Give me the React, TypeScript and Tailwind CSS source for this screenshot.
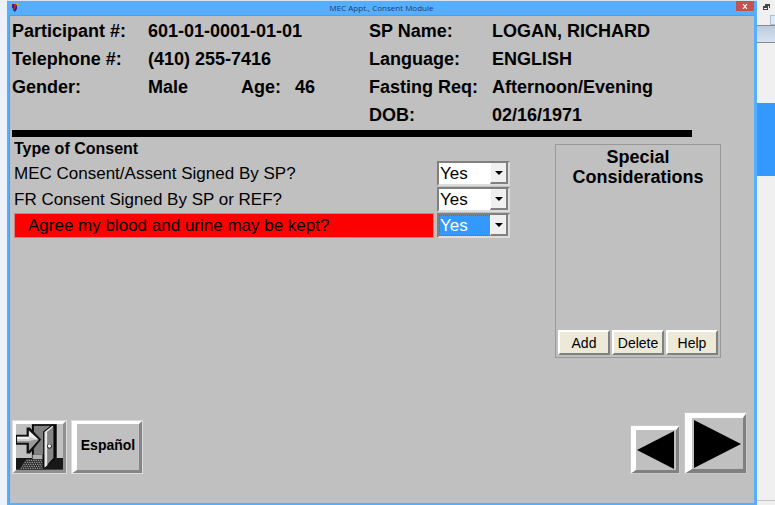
import { ReactNode, useState } from 'react'

interface Question {
  id: string
  text: string
  active?: boolean
}

const questions: Question[] = [
  { id: 'mec', text: 'MEC Consent/Assent Signed By SP?' },
  { id: 'fr', text: 'FR Consent Signed By SP or REF?' },
  { id: 'blood', text: 'Agree my blood and urine may be kept?', active: true },
]

function TitleBar() {
  return (
    <header className="relative flex h-[14px] items-center justify-center">
      <svg className="absolute left-px top-[2px] h-[9px] w-[9px]" viewBox="0 0 9 9" aria-hidden="true">
        <path d="M0 1l2-1h5l2 1v2H7v2H2V3H0z" fill="#c9a63a" />
        <path d="M2 1h2v5L2 5z" fill="#1d2f9c" />
        <path d="M4 1h2v5l-1 1H4z" fill="#c3202b" />
        <path d="M6 2h1v4L5 9 3 7V6h2z" fill="#2a2a8c" />
      </svg>
      <h1 className="font-['Open_Sans',sans-serif] text-[8px] leading-[12px] text-[#1f3f66]">
        MEC Appt., Consent Module
      </h1>
      <button
        aria-label="Close"
        className="absolute right-0 top-0 flex h-[10px] w-[18px] items-center justify-center bg-[#c75050]"
      >
        <svg className="h-[5px] w-[6px]" viewBox="0 0 6 5" aria-hidden="true">
          <path d="M1 0l4 5M5 0L1 5" stroke="#fff" strokeWidth="1.2" />
        </svg>
      </button>
    </header>
  )
}

function ParticipantInfo() {
  return (
    <dl className="grid auto-rows-[28px] grid-cols-[136px_221px_123px_1fr] items-center pl-[2px] pt-px text-[18px] font-bold leading-[28px]">
      <dt>Participant #:</dt>
      <dd>601-01-0001-01-01</dd>
      <dt>SP Name:</dt>
      <dd>LOGAN, RICHARD</dd>

      <dt>Telephone #:</dt>
      <dd>(410) 255-7416</dd>
      <dt>Language:</dt>
      <dd>ENGLISH</dd>

      <dt>Gender:</dt>
      <dd className="grid grid-cols-[93px_54px_1fr]">
        <span>Male</span>
        <span>Age:</span>
        <span>46</span>
      </dd>
      <dt>Fasting Req:</dt>
      <dd>Afternoon/Evening</dd>

      <dt className="col-start-3">DOB:</dt>
      <dd>02/16/1971</dd>
    </dl>
  )
}

function QuestionRow({ question }: { question: Question }) {
  const [answer, setAnswer] = useState('Yes')

  return (
    <div className="flex h-[25px] gap-[3px]">
      <label
        htmlFor={question.id}
        className={
          question.active
            ? 'flex-1 border border-[#d08080] bg-[#ff0000] pl-[13px] text-[17px] leading-[23px]'
            : 'flex-1 text-[17px] leading-[25px]'
        }
      >
        {question.text}
      </label>
      <div className="relative w-[73px] border-2 border-b-[#dcdcdc] border-l-[#808080] border-r-[#dcdcdc] border-t-[#808080]">
        <select
          id={question.id}
          value={answer}
          onChange={(e) => setAnswer(e.target.value)}
          className={
            question.active
              ? 'block h-full w-full appearance-none border border-dotted border-[#7a6a50] bg-[#3399ff] text-[17px] leading-[19px] text-white outline-none'
              : 'block h-full w-full appearance-none border border-white bg-white text-[17px] leading-[19px] outline-none'
          }
        >
          <option>Yes</option>
          <option>No</option>
        </select>
        {/* Drop-down arrow */}
        <span className="pointer-events-none absolute bottom-0 right-0 top-0 flex w-[18px] items-center justify-center border-b-2 border-l border-r-2 border-b-[#808080] border-l-white border-r-[#808080] bg-[#f0f0f0]">
          <svg className="h-1 w-2" viewBox="0 0 8 4" aria-hidden="true">
            <path d="M0 0h8L4 4z" />
          </svg>
        </span>
      </div>
    </div>
  )
}

function SmallButton({ children }: { children: ReactNode }) {
  return (
    <button className="h-[25px] flex-1 border-2 border-b-[#808080] border-l-white border-r-[#808080] border-t-white bg-[#ece9d8] text-[14px] leading-[20px]">
      {children}
    </button>
  )
}

function SpecialConsiderations() {
  return (
    <section className="mt-[7px] flex h-[214px] w-[166px] flex-col justify-between border border-[#999] p-[2px]">
      <h2 className="text-center text-[18px] font-bold leading-[20px]">
        Special
        <br />
        Considerations
      </h2>
      <div className="flex gap-[2px]">
        <SmallButton>Add</SmallButton>
        <SmallButton>Delete</SmallButton>
        <SmallButton>Help</SmallButton>
      </div>
    </section>
  )
}

function DoorIcon() {
  return (
    <svg className="h-[46px] w-[47px]" viewBox="0 0 142 138" aria-hidden="true">
      <path d="M0 102h142v36H0z" fill="#181818" />
      <path d="M48 0h75v102H48z" fill="#080808" />
      <path d="M54 5h55v87H54z" fill="#808080" />
      <path d="M50 92h30v14H50z" fill="#b0b0b0" />
      <path d="M30 106h52v30H12z" fill="#222" />
      {/* Door mat */}
      <path
        d="M31 109h49M26 115h54M22 121h58M18 127h62M14 133h66"
        stroke="#c4c4c4"
        strokeWidth="3"
        strokeDasharray="4 3"
      />
      <path d="M82 22l28-21h7v104l-31 29h-4z" fill="#0a0a0a" />
      <path d="M95 22l18-14v94l-18 20z" fill="#858585" />
      <path d="M86 24l24-19 3 3-18 15v101l-9 8z" fill="#e6e6e6" />
      <circle cx="101" cy="67" r="7" fill="#111" />
      <circle cx="101" cy="66" r="5" fill="#f5f5f5" />
      {/* Exit arrow */}
      <path d="M0 32h32V10h10l34 36-34 43H32V62H0z" fill="#101010" />
      <path d="M3 38h36V19l30 28-30 33V56H3z" fill="#999" />
      <path d="M3 38h36V20l27 25-27 4H3z" fill="#f0f0f0" />
      <path d="M3 45h36v-8l26 9-26 4H3z" fill="#cfcfcf" />
    </svg>
  )
}

function NavigationBar() {
  return (
    <footer className="mt-auto flex items-end justify-between pb-[29px] pl-[2px] pr-[7px] pt-4">
      <div className="flex gap-1">
        <button
          aria-label="Exit"
          className="flex h-[54px] w-[55px] items-center justify-center border-4 border-b-[#909090] border-l-white border-r-[#909090] border-t-white outline outline-1 -outline-offset-1 outline-[#dcdcdc]"
        >
          <DoorIcon />
        </button>
        <button className="h-[54px] w-[72px] border-b-4 border-l-[6px] border-r-4 border-t-4 border-b-[#858585] border-l-white border-r-[#858585] border-t-white pb-1 text-[14px] font-bold outline outline-1 -outline-offset-1 outline-[#dcdcdc]">
          Español
        </button>
      </div>
      <div className="flex items-end gap-1">
        <button
          aria-label="Previous"
          className="flex h-[49px] w-[50px] items-center justify-center border-b-4 border-l-[6px] border-r-4 border-t-[5px] border-b-[#808080] border-l-white border-r-[#808080] border-t-white outline outline-1 -outline-offset-1 outline-[#c8c8c8]"
        >
          <svg className="h-[38px] w-[38px]" viewBox="0 0 38 38" aria-hidden="true">
            <path d="M0 19L37 0v38z" />
          </svg>
        </button>
        <button
          aria-label="Next"
          className="flex h-[62px] w-[63px] items-center justify-center border-b-[5px] border-l-8 border-r-4 border-t-[6px] border-b-[#808080] border-l-white border-r-[#808080] border-t-white outline outline-1 -outline-offset-1 outline-[#c8c8c8]"
        >
          <svg className="h-[48px] w-[47px]" viewBox="0 0 47 48" aria-hidden="true">
            <path d="M0 0l47 24L0 48z" />
          </svg>
        </button>
      </div>
    </footer>
  )
}

/* Part of the parent window that shows beside the dialog */
function ParentWindowEdge() {
  return (
    <aside className="flex w-[18px] flex-col bg-[#f0f0f0]" aria-hidden="true">
      <div className="flex h-[25px] flex-col items-center justify-between overflow-hidden pt-1">
        <svg className="h-[6px] w-[7px]" viewBox="0 0 7 6">
          <path d="M2 0h5v4H6V2H2z" fill="#444" />
          <path d="M0 2h5v4H0zM1 4v1h3V4z" fill="#444" fillRule="evenodd" />
        </svg>
        <div className="h-[10px] w-[5px] self-end border border-r-0 border-[#a9bfd6] bg-[#dce9f7]" />
      </div>
      <div className="h-[18px] border-y border-[#8a8a8a] bg-linear-to-b from-[#bccbdc] to-[#d7e3f1]" />
      <div className="h-[60px]" />
      <div className="h-[73px] bg-[#3399ff]" />
      <div className="mt-auto h-[5px] border-t border-[#c8c8c8]" />
    </aside>
  )
}

export default function App() {
  return (
    <div className="flex min-h-screen bg-[#edf1fa] pl-[7px] font-['Liberation_Sans',Arial,sans-serif] text-black">
      <div className="flex flex-1 flex-col border-t border-[#d5e3f3] bg-[#55aeff] pb-[2px] pl-[2px] pr-[3px]">
        <TitleBar />
        <main className="flex flex-1 flex-col border-l border-t border-[#8a8f96] bg-[#c0c0c0]">
          <ParticipantInfo />
          <div className="ml-[2px] mr-[62px] mt-px h-[7px] bg-black" />
          <div className="flex gap-[45px] pl-1 pr-[33px]">
            <form className="flex-1">
              <h2 className="mb-[2px] pt-px text-[16px] font-bold leading-[21px]">Type of Consent</h2>
              <div className="flex flex-col gap-px">
                {questions.map((question) => (
                  <QuestionRow key={question.id} question={question} />
                ))}
              </div>
            </form>
            <SpecialConsiderations />
          </div>
          <NavigationBar />
        </main>
      </div>
      <ParentWindowEdge />
    </div>
  )
}
